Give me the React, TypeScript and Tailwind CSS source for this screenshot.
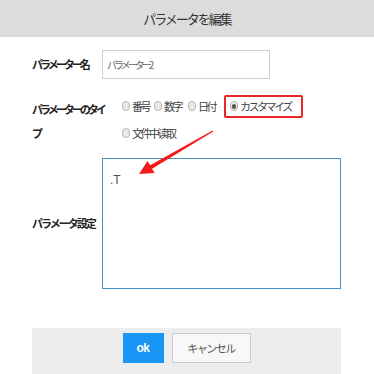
import React from "react";

const Radio = ({ checked = false }: { checked?: boolean }) => (
  <span className="inline-flex items-center justify-center w-[8px] h-[10px] rounded-full border border-[#b5b5b5] bg-[#e9e9e9] shrink-0">
    {checked && <span className="w-[4px] h-[5px] rounded-full bg-[#555]" />}
  </span>
);

const RadioItem = ({ label, checked, w }: { label: string; checked?: boolean; w: string }) => (
  <div className={`flex items-center gap-[2px] ${w}`}>
    <Radio checked={checked} />
    <span className="text-[11px] tracking-[-2.5px] text-[#444] leading-[18px] whitespace-nowrap">{label}</span>
  </div>
);

export default function App() {
  return (
    <div className="relative w-[374px] h-[374px] bg-white overflow-hidden font-['Noto_Sans_CJK_JP',sans-serif]">
      <div className="h-[37px] bg-[#dcdcdc] flex items-center justify-center text-[13px] tracking-[-2px] text-[#333]">
        パラメータを編集
      </div>
      <div className="pl-[32px] pr-[33px]">
        <div className="mt-[13px] flex items-center">
          <div className="w-[70px] text-[11px] font-bold tracking-[-3px] text-[#222]">パラメーター名</div>
          <div className="w-[168px] h-[29px] border border-[#cfcfcf] px-[4px] flex items-center text-[10px] tracking-[-3px] text-[#666]">
            パラメーター2
          </div>
        </div>

        <div className="mt-[18px] flex">
          <div className="w-[90px] text-[11px] font-bold tracking-[-3px] text-[#222]">
            <div className="h-[18px] leading-[18px] mt-[3px]">パラメーターのタイ</div>
            <div className="h-[18px] leading-[18px] mt-[6px]">プ</div>
          </div>
          <div className="flex flex-col gap-[9px]">
            <div className="flex items-center h-[18px]">
              <RadioItem label="番号" w="w-[32px]" />
              <RadioItem label="数字" w="w-[34px]" />
              <RadioItem label="日付" w="w-[42px]" />
              <RadioItem label="カスタマイズ" checked w="w-[60px]" />
            </div>
            <div className="flex items-center h-[18px]">
              <RadioItem label="文件中读取" w="w-[60px]" />
            </div>
          </div>
        </div>

        <div className="mt-[16px] flex items-center">
          <div className="w-[70px] text-[11px] font-bold tracking-[-2px] text-[#222]">パラメータ設定</div>
          <div className="w-[239px] h-[131px] border border-[#4a8fc4] pl-[7px] pt-[12px] text-[12px] text-[#555] font-['Liberation_Sans',sans-serif] leading-[18px]">
            .T
          </div>
        </div>

        <div className="mt-[39px] h-[46px] bg-[#ededed] flex justify-center items-start pt-[5px] gap-[8px]">
          <div className="w-[41px] h-[30px] bg-[#1996f5] text-white text-[12px] font-bold flex items-center justify-center font-['Liberation_Sans',sans-serif] tracking-[-0.5px]">
            ok
          </div>
          <div className="w-[79px] h-[30px] bg-[#f8f8f8] border border-[#cccccc] text-[#555] text-[11px] tracking-[-1.5px] flex items-center justify-center">
            キャンセル
          </div>
        </div>
      </div>

      <div className="absolute left-[224px] top-[95px] w-[79px] h-[23px] border-2 border-[#e8262a] rounded-[2px]" />

      <svg className="absolute left-0 top-0" width="374" height="374" viewBox="0 0 374 374">
        <polygon
          points="139,174 147.6,160.9 150.1,165.3 212.7,130.6 213.3,131.4 152.1,168.7 154.6,173.1"
          fill="#f21b1b"
        />
      </svg>
    </div>
  );
}
